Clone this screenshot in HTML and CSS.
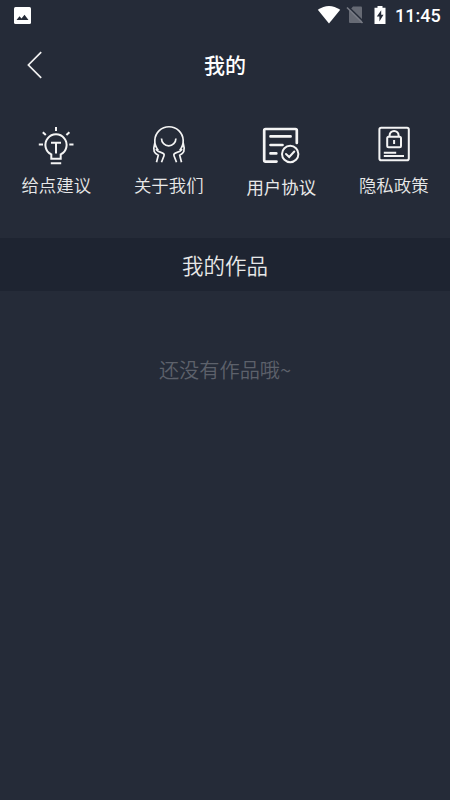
FILE: index.html
```html
<!DOCTYPE html>
<html lang="zh-CN">
<head>
<meta charset="utf-8">
<title>我的</title>
<link rel="stylesheet" href="styles.css">
</head>
<body>
<div class="status">
  <svg class="photo" width="17" height="17" viewBox="0 0 17 17"><rect width="17" height="17" rx="1.5" fill="#fff"/><path d="M2.5 13 5.5 9.3 7.5 11.6 10.5 7.8 14.5 13Z" fill="#252b38"/></svg>
  <svg class="wifi" width="24" height="18" viewBox="0 0 24 18"><path d="M.8 3.8Q12-3.8 23.2 3.8L12 17.5Z" fill="#fff"/></svg>
  <svg class="sim" width="18" height="18" viewBox="0 0 18 18"><path d="M7 .5H15Q16 .5 16 1.5V17H4Q3 17 3 16V5Z" fill="#666a74"/><path d="M1.5 0 18 16" stroke="#252b38" stroke-width="1.6"/><path d="M1 1.5 16.5 17" stroke="#777b84" stroke-width="1.6"/></svg>
  <svg class="battery" width="12" height="18" viewBox="0 0 12 18"><path d="M3.5 0H8.5V1.7H11.5V18H.5V1.7H3.5Z" fill="#fff"/><path d="M7.2 4.2 2.8 10.5H5.4V15.5L9.5 8.8H7.2Z" fill="#252b38"/></svg>
  <span class="time">11:45</span>
</div>
<header class="header">
  <svg class="back" width="16" height="28" viewBox="0 0 16 28"><path d="M14.2 1.2 1.4 14 14.2 26.8" fill="none" stroke="#f1f1f1" stroke-width="1.7"/></svg>
  <h1 class="title">我的</h1>
</header>
<nav class="menu">
  <a class="item">
    <svg class="icon" viewBox="0 0 40 40"><path d="M15.3 33.8V29.4A10.6 10.6 0 1 1 24.7 29.4V33.8ZM14.8 38.2H25.2M15 17.8H25M20 17.8V28.5M2.8 19.5H7M33.3 19.5H37.5M20 2V6M6.8 7.2 9.8 10M33.4 7.2 30.4 10"/></svg>
    <span>给点建议</span>
  </a>
  <a class="item">
    <svg class="icon thin" viewBox="0 0 40 40"><path d="M9.3 25.3A14.2 14.2 0 1 1 30.7 25.3M12.5 13.6A7.2 7.2 0 0 0 26.9 13.6M5.8 18Q4.3 23 5.2 26.6Q5.8 28.4 9.3 30.2L7.5 37.3M6.8 24.2Q8.5 26.5 12.5 27.6 15.8 28.6 15 30.7L12.5 37.3M34.2 18Q35.7 23 34.8 26.6 34.2 28.4 30.7 30.2L32.5 37.3M33.2 24.2Q31.5 26.5 27.5 27.6 24.2 28.6 25 30.7L27.5 37.3"/></svg>
    <span>关于我们</span>
  </a>
  <a class="item low">
    <svg class="icon bold" viewBox="0 0 40 40"><path d="M15.5 35.6H4.6Q3.2 35.6 3.2 34.2V4.4Q3.2 3 4.6 3H34.4Q35.8 3 35.8 4.4V17M9.5 10.4H29.6M9.5 19H21.5M9.5 27.4H15.3"/><circle cx="29.2" cy="28" r="8.2" stroke-width="2"/><path d="M25 28 28.2 31 33.3 25.5" stroke-width="2"/></svg>
    <span>用户协议</span>
  </a>
  <a class="item">
    <svg class="icon" viewBox="0 0 40 40"><rect x="5.4" y="2.8" width="29.4" height="32.4" rx="1.8"/><rect x="13.2" y="11.7" width="13.8" height="10.6" rx="1.5"/><path d="M15.6 12V10.5A4.5 4.5 0 0 1 24.6 10.5V12M20.1 15V19M9.8 27.8H22.2M9.8 31H30"/></svg>
    <span>隐私政策</span>
  </a>
</nav>
<h2 class="section">我的作品</h2>
<p class="empty">还没有作品哦~</p>
</body>
</html>
```
FILE: styles.css
```css
* { box-sizing: border-box; }
body {
  margin: 0;
  min-height: 800px;
  background: #252b38;
  color: #e8e8e8;
  font-family: "Noto Sans CJK SC", sans-serif;
}
.status {
  display: flex;
  align-items: flex-start;
  height: 32px;
  padding: 6px 10px 0 14px;
}
.photo { margin-top: 1px; }
.wifi { margin-left: auto; }
.sim { margin-left: 5px; }
.battery { margin-left: 10px; }
.time {
  width: 45px;
  margin-left: 9px;
  color: #fff;
  font: 500 18px/20px Roboto, sans-serif;
}
.header {
  display: grid;
  grid-template-columns: 60px 1fr 60px;
  align-items: center;
  height: 66px;
}
.back { margin-left: 27px; }
.title {
  margin: 0;
  padding-bottom: 2px;
  color: #fff;
  font-size: 21px;
  font-weight: 500;
  line-height: 30px;
  text-align: center;
}
.menu {
  display: grid;
  grid-template-columns: repeat(4, 1fr);
  height: 140px;
  padding-top: 27px;
}
.item {
  display: flex;
  flex-direction: column;
  align-items: center;
  font-size: 17.4px;
  font-weight: 350;
  line-height: 26px;
  gap: 7px;
}
.low {
  padding-top: 1px;
  gap: 8px;
  font-weight: 400;
}
.icon {
  width: 40px;
  height: 40px;
  flex: none;
  fill: none;
  stroke: #f4f4f4;
  stroke-width: 2;
}
.thin { stroke-width: 1.7; }
.bold { stroke-width: 2.7; stroke-linecap: round; }
.section {
  height: 53px;
  margin: 0;
  background: #1e2431;
  font-size: 21.5px;
  font-weight: 350;
  line-height: 54px;
  text-align: center;
}
.empty {
  margin: 64px 0 0;
  color: #5d616b;
  font-size: 20.2px;
  font-weight: 350;
  line-height: 30px;
  text-align: center;
}
```
